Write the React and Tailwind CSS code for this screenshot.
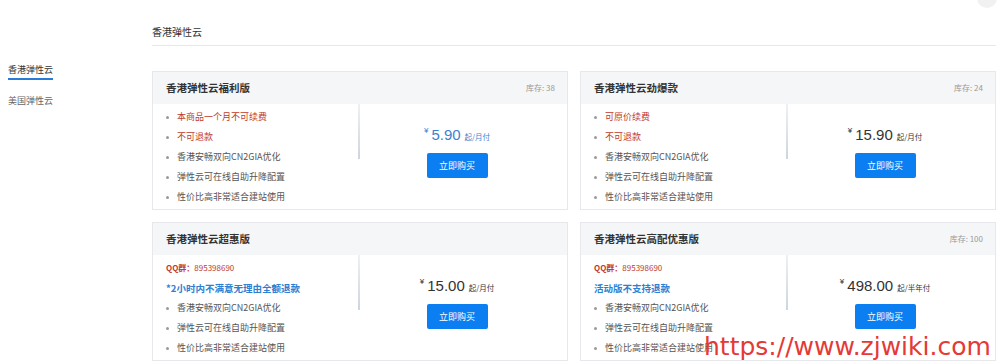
const cjk = "font-['Noto_Sans_CJK_SC',_'Noto_Sans',_sans-serif]";

const products = [
  {
    name: "香港弹性云福利版",
    stock: "库存: 38",
    notes: [
      { text: "本商品一个月不可续费", tone: "red" },
      { text: "不可退款", tone: "red" },
    ],
    price: "5.90",
    unit: "起/月付",
    highlight: true,
  },
  {
    name: "香港弹性云劲爆款",
    stock: "库存: 24",
    notes: [
      { text: "可原价续费", tone: "red" },
      { text: "不可退款", tone: "red" },
    ],
    price: "15.90",
    unit: "起/月付",
  },
  {
    name: "香港弹性云超惠版",
    stock: "",
    qq: true,
    notice: "*2小时内不满意无理由全额退款",
    price: "15.00",
    unit: "起/月付",
  },
  {
    name: "香港弹性云高配优惠版",
    stock: "库存: 100",
    qq: true,
    notice: "活动版不支持退款",
    price: "498.00",
    unit: "起/半年付",
  },
];

const features = ["香港安畅双向CN2GIA优化", "弹性云可在线自助升降配置", "性价比高非常适合建站使用"];

function Bullet({ text, red }) {
  return (
    <li className={`flex items-center h-[20px] text-[9px] ${red ? "text-[#c0392b]" : "text-[#555]"}`}>
      <span className="w-[3px] h-[3px] rounded-full bg-[#9a9a9a] mr-[8px] shrink-0"></span>
      {text}
    </li>
  );
}

function ProductCard({ p }) {
  return (
    <div className="border border-[#e6e8eb] bg-white">
      <div className="h-[32px] bg-[#f5f6f7] flex items-center justify-between pl-[13px] pr-[12px]">
        <span className="text-[10.5px] font-bold text-[#333]">{p.name}</span>
        <span className="text-[8px] text-[#999]">{p.stock}</span>
      </div>
      <div className="flex">
        <ul className="w-[205px] pl-[13px] pt-[3px] pb-[2px]">
          {p.qq && (
            <li className="flex items-center h-[20px] text-[8px] text-[#c0392b]">
              <span className="font-bold">QQ群：</span>
              <span>895398690</span>
            </li>
          )}
          {p.notice && (
            <li className="flex items-center h-[20px] text-[9.5px] font-bold text-[#2f7fd0]">{p.notice}</li>
          )}
          {p.notes && p.notes.map((n) => <Bullet key={n.text} text={n.text} red />)}
          {features.map((f) => (
            <Bullet key={f} text={f} />
          ))}
        </ul>
        <div className="w-[2px] h-[55px] bg-gradient-to-b from-[#eef1f4] to-[#cdd5dd]"></div>
        <div className="flex-1 flex flex-col items-center pt-[19px] pr-[13px]">
          <div
            className={`flex items-baseline h-[24px] leading-[24px] font-['Liberation_Sans',_sans-serif] ${
              p.highlight ? "text-[#3d7fd1]" : "text-[#333]"
            }`}
          >
            <span className="text-[8px] relative -top-[7px] mr-[3px]">¥</span>
            <span className="text-[15px]">{p.price}</span>
            <span className={`text-[7.5px] ml-[4px] ${cjk}`}>{p.unit}</span>
          </div>
          <button className="mt-[6px] w-[61px] h-[25px] bg-[#0b7ef2] text-white text-[9px] rounded-[2px]">
            立即购买
          </button>
        </div>
      </div>
    </div>
  );
}

export default function App() {
  return (
    <div className={`relative w-[1000px] h-[364px] overflow-hidden bg-white flex ${cjk}`}>
      {/* sidebar */}
      <div className="w-[152px] shrink-0 pl-2 pt-[62px]">
        <div className="w-fit text-[9px] leading-[16px] text-[#333] border-b-2 border-[#2a7ad8]">香港弹性云</div>
        <div className="mt-[13px] text-[9px] leading-[16px] text-[#666]">美国弹性云</div>
      </div>

      {/* main */}
      <div className="flex-1 pr-[4px] pt-[24px]">
        <div className="text-[10px] leading-[16px] text-[#333] pb-[5px] border-b border-[#e8e8e8]">香港弹性云</div>
        <div className="grid grid-cols-2 gap-[12px] mt-[25px]">
          {products.map((p) => (
            <ProductCard key={p.name} p={p} />
          ))}
        </div>
      </div>

      <div className="absolute -top-[12px] right-[3px] w-[20px] h-[20px] rounded-full bg-[#f1f1f1]"></div>

      {/* watermark */}
      <div className="absolute left-[704px] top-[334px] leading-none text-[25px] text-[#e53935] font-['DejaVu_Sans',_sans-serif]">
        https://www.zjwiki.com
      </div>
    </div>
  );
}
